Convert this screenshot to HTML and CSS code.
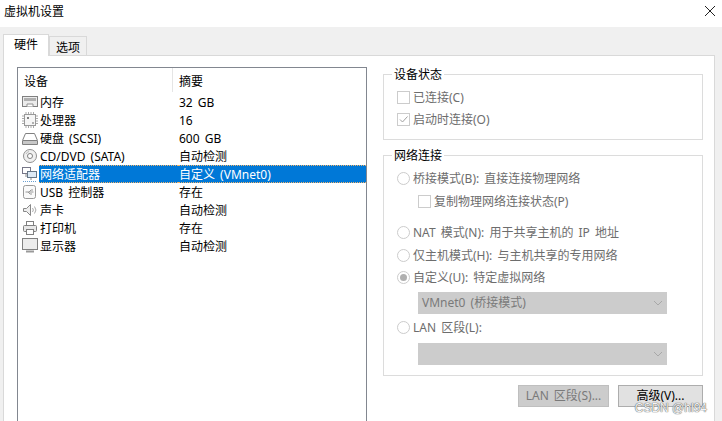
FILE: index.html
```html
<!DOCTYPE html>
<html lang="zh-CN">

<head>
    <meta charset="UTF-8">
    <meta name="viewport" content="width=device-width, initial-scale=1.0">
    <title>虚拟机设置</title>
    <link rel="stylesheet" href="styles.css">
</head>

<body>

    <div class="window">
        <div class="titlebar">
            <span>虚拟机设置</span>
            <svg class="close" viewBox="0 0 10 10"><path d="M0 0l10 10M10 0L0 10" stroke="#222" fill="none"/></svg>
        </div>

        <div class="content">
            <div class="tabs">
                <div class="tab active">硬件</div>
                <div class="tab">选项</div>
            </div>

            <div class="panel">
                <div class="device-list">
                    <div class="list-head">
                        <div class="col-name">设备</div>
                        <div class="col-sum">摘要</div>
                    </div>

                    <div class="row">
                        <svg class="icon" viewBox="0 0 16 16"><rect x="0.5" y="2.5" width="15" height="10" fill="#ececec" stroke="#808080"/><rect x="2" y="4" width="12" height="3" fill="#b0b0b0"/><path d="M5 12.500v-2.500h6v2.500" fill="#fff" stroke="#909090"/></svg>
                        <div class="col-name">内存</div>
                        <div class="col-sum">32 GB</div>
                    </div>
                    <div class="row">
                        <svg class="icon" viewBox="0 0 16 16"><rect x="2.5" y="2.5" width="11" height="11" fill="#f6f6f6" stroke="#999"/><rect x="5" y="5" width="2" height="2" fill="#808080"/><rect x="10" y="10" width="2" height="2" fill="#b0b0b0"/><path d="M4 0v2M6.500 0v2M9 0v2M11.500 0v2M4 14v2M6.500 14v2M9 14v2M11.500 14v2M0 4h2M0 6.500h2M0 9h2M0 11.500h2M14 4h2M14 6.500h2M14 9h2M14 11.500h2" stroke="#aaa"/></svg>
                        <div class="col-name">处理器</div>
                        <div class="col-sum">16</div>
                    </div>
                    <div class="row">
                        <svg class="icon" viewBox="0 0 16 16"><path d="M0.500 10.500L3.500 3.500h9l3 7v4h-15z" fill="#fff" stroke="#808080"/><path d="M1 10.500h14" stroke="#808080"/><rect x="1" y="11" width="14" height="3" fill="#c8c8c8"/></svg>
                        <div class="col-name">硬盘 (SCSI)</div>
                        <div class="col-sum">600 GB</div>
                    </div>
                    <div class="row">
                        <svg class="icon" viewBox="0 0 16 16"><circle cx="8" cy="8" r="6.500" fill="#f0f0f0" stroke="#909090"/><circle cx="8" cy="8" r="2.500" fill="#fff" stroke="#808080"/><path d="M4 6a4.500 4.500 0 0 1 3-2.500" fill="none" stroke="#bbb"/></svg>
                        <div class="col-name">CD/DVD (SATA)</div>
                        <div class="col-sum">自动检测</div>
                    </div>
                    <div class="row selected">
                        <svg class="icon" viewBox="0 0 16 16"><rect x="0.500" y="1.500" width="8" height="6" fill="#fff" stroke="#778"/><rect x="5.500" y="5.500" width="9" height="6" fill="#dce9f5" stroke="#678"/><path d="M4 8v3M9 12v2" stroke="#888"/><path d="M1 15.500h14" stroke="#6a9fd0" stroke-dasharray="1 1"/></svg>
                        <div class="col-name">网络适配器</div>
                        <div class="col-sum">自定义 (VMnet0)</div>
                    </div>
                    <div class="row">
                        <svg class="icon" viewBox="0 0 16 16"><rect x="1.500" y="1.500" width="12" height="13" rx="2" fill="#fafafa" stroke="#999"/><path d="M3.500 8h8M7 8l2-2h2M6 8l2 2h2" fill="none" stroke="#999"/></svg>
                        <div class="col-name">USB 控制器</div>
                        <div class="col-sum">存在</div>
                    </div>
                    <div class="row">
                        <svg class="icon" viewBox="0 0 16 16"><path d="M1.500 6.500h3l4-4v11l-4-4h-3z" fill="#eee" stroke="#888"/><path d="M10.500 6a3 3 0 0 1 0 4M12.500 4.500a5.500 5.500 0 0 1 0 7" fill="none" stroke="#aaa"/></svg>
                        <div class="col-name">声卡</div>
                        <div class="col-sum">自动检测</div>
                    </div>
                    <div class="row">
                        <svg class="icon" viewBox="0 0 16 16"><rect x="4.500" y="1.500" width="7" height="4" fill="#fff" stroke="#808080"/><rect x="1.500" y="5.500" width="13" height="6" rx="1" fill="#e8e8e8" stroke="#808080"/><rect x="4.500" y="9.500" width="7" height="5" fill="#fff" stroke="#808080"/></svg>
                        <div class="col-name">打印机</div>
                        <div class="col-sum">存在</div>
                    </div>
                    <div class="row">
                        <svg class="icon" viewBox="0 0 16 16"><rect x="0.500" y="0.500" width="15" height="11" fill="#ececec" stroke="#808080"/><path d="M4 13.500h8" stroke="#999" stroke-width="2"/></svg>
                        <div class="col-name">显示器</div>
                        <div class="col-sum">自动检测</div>
                    </div>
                </div>

                <div class="settings">
                    <fieldset class="group status-group">
                        <legend>设备状态</legend>
                        <div class="opt"><span class="check"></span>已连接(C)</div>
                        <div class="opt"><span class="check">
                            <svg viewBox="0 0 11 11"><path d="M2 5.500l2.500 2.500 5-5.500" fill="none" stroke="#a0a0a0"/></svg>
                        </span>启动时连接(O)</div>
                    </fieldset>

                    <fieldset class="group net-group">
                        <legend>网络连接</legend>
                        <div class="opt"><span class="radio"></span>桥接模式(B): 直接连接物理网络</div>
                        <div class="opt sub"><span class="check"></span>复制物理网络连接状态(P)</div>
                        <div class="opt nat"><span class="radio"></span>NAT 模式(N): 用于共享主机的 IP 地址</div>
                        <div class="opt tight"><span class="radio"></span>仅主机模式(H): 与主机共享的专用网络</div>
                        <div class="opt"><span class="radio on"></span>自定义(U): 特定虚拟网络</div>
                        <div class="select">VMnet0 (桥接模式)<svg class="arrow" viewBox="0 0 10 6"><path d="M1 1l4 4 4-4" fill="none" stroke="#a8a8a8"/></svg></div>
                        <div class="opt"><span class="radio"></span>LAN 区段(L):</div>
                        <div class="select last"><svg class="arrow" viewBox="0 0 10 6"><path d="M1 1l4 4 4-4" fill="none" stroke="#a8a8a8"/></svg></div>
                    </fieldset>

                    <div class="buttons">
                        <div class="btn disabled">LAN 区段(S)...</div>
                        <div class="btn">高级(V)...</div>
                    </div>
                </div>
            </div>
        </div>
    </div>

    <div class="watermark">CSDN @hl94</div>

</body>

</html>
```

FILE: styles.css
```css
html,
body {
    margin: 0;
    padding: 0;
    height: 100%;
    overflow: hidden;
}

body {
    position: relative;
    font-family: "Noto Sans", "Noto Sans CJK SC", sans-serif;
    font-size: 12px;
    word-spacing: 2px;
    color: #000;
    background-color: #fff;
}

.window {
    height: 421px;
    display: flex;
    flex-direction: column;
}

.titlebar {
    height: 27px;
    line-height: 24px;
    padding: 0 7px 0 4px;
    box-sizing: border-box;
    display: flex;
    justify-content: space-between;
}

.close {
    width: 10px;
    height: 10px;
    margin-top: 6px;
}

.content {
    flex: 1;
    min-height: 0;
    background-color: #f0f0f0;
    padding: 7px 7px 0 3px;
    display: flex;
    flex-direction: column;
}

.tabs {
    display: flex;
    align-items: flex-end;
    height: 21px;
}

.tab {
    width: 38px;
    height: 19px;
    line-height: 21px;
    text-align: center;
    box-sizing: border-box;
    border: 1px solid #d9d9d9;
    border-bottom: none;
}

.tab.active {
    width: 46px;
    height: 22px;
    line-height: 20px;
    background-color: #fff;
    position: relative;
    z-index: 1;
    margin-bottom: -1px;
}

.panel {
    flex: 1;
    min-height: 0;
    background-color: #fff;
    border: 1px solid #d9d9d9;
    border-bottom: none;
    padding: 11px 11px 0 13px;
    display: flex;
    gap: 16px;
}

.device-list {
    width: 350px;
    box-sizing: border-box;
    border: 1px solid #828790;
    border-bottom: none;
    padding-left: 4px;
}

.list-head {
    display: flex;
    height: 25px;
    line-height: 27px;
    margin-left: -4px;
    padding-left: 6px;
}

.list-head .col-name {
    width: 148px;
    height: 24px;
    border-right: 1px solid #e5e5e5;
}

.list-head .col-sum {
    padding-left: 6px;
}

.row {
    display: flex;
    height: 18px;
    line-height: 20px;
    white-space: nowrap;
}

.icon {
    width: 16px;
    height: 16px;
    flex: none;
    margin: 1px 1px 0 0;
}

.row .col-name {
    width: 139px;
    padding-left: 1px;
    box-sizing: border-box;
}

.row .col-sum {
    flex: 1;
    padding-left: 1px;
}

.row.selected .col-name,
.row.selected .col-sum {
    height: 18px;
    line-height: 18px;
    box-sizing: border-box;
    background-color: #0078d7;
    border-top: 1px dotted #f2b36a;
    border-bottom: 1px dotted #f2b36a;
    color: #fff;
}

.settings {
    width: 320px;
    display: flex;
    flex-direction: column;
}

.group {
    margin: 0;
    padding: 3px 0 0 13px;
    border: 1px solid #dcdcdc;
    min-width: 0;
    box-sizing: border-box;
    color: #6d6d6d;
}

.group legend {
    color: #000;
    padding: 0 2px;
    margin-left: -5px;
    line-height: 17px;
}

.status-group {
    height: 74px;
    margin-top: -1px;
}

.net-group {
    height: 229px;
    margin-top: 7px;
}

.opt {
    display: flex;
    align-items: center;
    height: 22px;
    white-space: nowrap;
}

.opt.sub {
    padding-left: 21px;
    margin-top: 1px;
}

.opt.nat {
    margin-top: 9px;
}

.opt.tight {
    margin-top: 1px;
}

.check {
    width: 13px;
    height: 13px;
    box-sizing: border-box;
    border: 1px solid #cccccc;
    background-color: #fff;
    margin-right: 3px;
    flex: none;
    display: flex;
}

.radio {
    width: 13px;
    height: 13px;
    box-sizing: border-box;
    border: 1px solid #cccccc;
    border-radius: 50%;
    background-color: #fff;
    margin-right: 3px;
    flex: none;
    display: flex;
    align-items: center;
    justify-content: center;
}

.radio.on::after {
    content: "";
    width: 7px;
    height: 7px;
    border-radius: 50%;
    background-color: #b0b0b0;
}

.select {
    width: 249px;
    height: 22px;
    line-height: 22px;
    margin: 4px 0 2px 21px;
    padding-left: 4px;
    box-sizing: border-box;
    background-color: #cccccc;
    color: #7a7a7a;
    display: flex;
    align-items: center;
    position: relative;
}

.select.last {
    margin-top: 5px;
}

.arrow {
    position: absolute;
    right: 4px;
    top: 8px;
    width: 10px;
    height: 6px;
}

.buttons {
    display: flex;
    justify-content: flex-end;
    gap: 9px;
    margin-top: 9px;
}

.btn {
    height: 22px;
    width: 85px;
    padding-top: 2px;
    line-height: 16px;
    text-align: center;
    box-sizing: border-box;
    border: 1px solid #adadad;
    background-color: #e1e1e1;
}

.btn.disabled {
    width: 91px;
    background-color: #cccccc;
    border-color: #bfbfbf;
    color: #7a7a7a;
}

.watermark {
    position: absolute;
    right: 15px;
    top: 404px;
    font-family: "Liberation Sans", sans-serif;
    font-size: 12px;
    line-height: 9px;
    word-spacing: 0;
    color: #f4f4f4;
    text-shadow: 0 0 1px #555, 0 0 1px #555;
}
```
